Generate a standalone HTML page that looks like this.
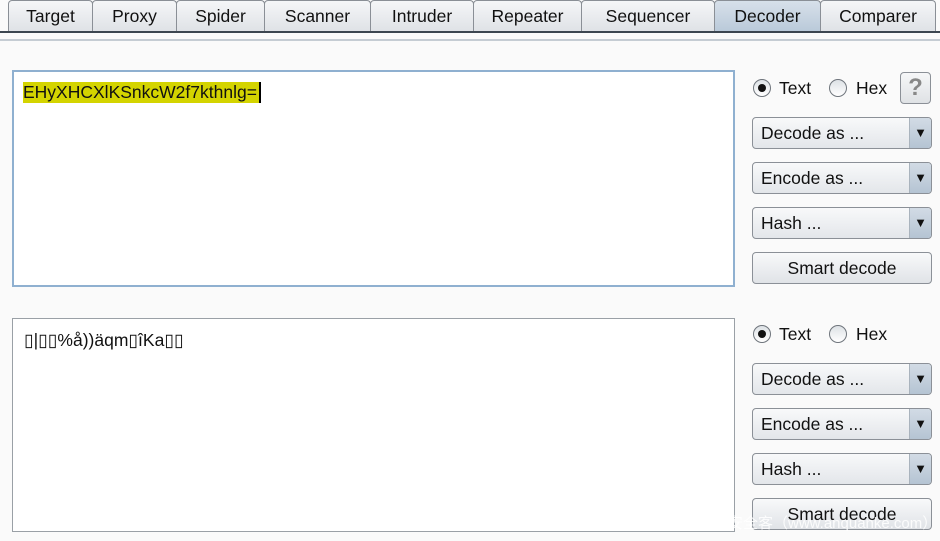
<!DOCTYPE html><html><head><style>
body{margin:0;width:940px;height:541px;background:#fafafa;font-family:"Liberation Sans",Arial,sans-serif;position:relative;overflow:hidden;color:#111}
.tab{position:absolute;top:0;height:31px;border:1px solid #8a8f96;border-bottom:none;border-radius:4px 4px 0 0;background:linear-gradient(#f5f6f8,#dfe2e6);font-size:17.5px;text-align:center;line-height:31px;box-sizing:border-box}
.sel{background:linear-gradient(#d7e0ea,#b9c9d9)}
.ta{position:absolute;background:#fff;box-sizing:border-box}
.dd{position:absolute;left:752px;width:180px;height:32px;box-sizing:border-box;border:1px solid #8b9097;border-radius:4px;background:linear-gradient(#f8f9fa,#e3e6ea);font-size:17.5px;line-height:30px;padding-left:8px}
.dd i{position:absolute;right:0;top:0;width:21px;height:30px;background:linear-gradient(#d2dbe5,#b5c4d3);border-left:1px solid #a9b3bd;border-radius:0 3px 3px 0;font-style:normal;font-size:13px;text-align:center;line-height:30px}
.btn{position:absolute;left:752px;width:180px;height:32px;box-sizing:border-box;border:1px solid #8b9097;border-radius:4px;background:linear-gradient(#f8f9fa,#e0e3e7);font-size:17.5px;line-height:30px;text-align:center}
.rad{position:absolute;width:18px;height:18px;border-radius:50%;border:1px solid #6f757c;box-sizing:border-box;background:linear-gradient(#dde1e5,#fff)}
.rad.on::after{content:"";position:absolute;left:4px;top:4px;width:8px;height:8px;border-radius:50%;background:#111}
.lbl{position:absolute;font-size:17.5px}
</style></head><body>
<div class="tab" style="left:8px;width:85px">Target</div>
<div class="tab" style="left:92px;width:85px">Proxy</div>
<div class="tab" style="left:176px;width:89px">Spider</div>
<div class="tab" style="left:264px;width:107px">Scanner</div>
<div class="tab" style="left:370px;width:104px">Intruder</div>
<div class="tab" style="left:473px;width:109px">Repeater</div>
<div class="tab" style="left:581px;width:134px">Sequencer</div>
<div class="tab sel" style="left:714px;width:107px;height:32px">Decoder</div>
<div class="tab" style="left:820px;width:116px">Comparer</div>
<div style="position:absolute;left:0;top:31px;width:940px;height:2px;background:#3c4650"></div>
<div style="position:absolute;left:0;top:39px;width:940px;height:2px;background:#c5ccd3"></div>

<div class="ta" style="left:12px;top:70px;width:723px;height:217px;border:2px solid #8fb0d0">
<span style="position:absolute;left:9px;top:10px;background:#d4d400;font-size:17.5px;line-height:21px;padding-right:2px;border-right:2px solid #000">EHyXHCXlKSnkcW2f7kthnlg=</span></div>
<div class="ta" style="left:12px;top:318px;width:723px;height:214px;border:1px solid #9aa0a6">
<span style="position:absolute;left:11px;top:11px;font-size:17.5px">▯|▯▯%å))äqm▯îKa▯▯</span></div>

<div class="rad on" style="left:753px;top:79px"></div><span class="lbl" style="left:779px;top:78px">Text</span>
<div class="rad" style="left:829px;top:79px"></div><span class="lbl" style="left:856px;top:78px">Hex</span>
<div style="position:absolute;left:900px;top:72px;width:31px;height:32px;box-sizing:border-box;border:1px solid #8b9097;border-radius:4px;background:linear-gradient(#f6f7f8,#dfe2e5);color:#888;font-size:24px;font-weight:bold;text-align:center;line-height:30px">?</div>
<div class="dd" style="top:117px">Decode as ...<i>▼</i></div>
<div class="dd" style="top:162px">Encode as ...<i>▼</i></div>
<div class="dd" style="top:207px">Hash ...<i>▼</i></div>
<div class="btn" style="top:252px">Smart decode</div>

<div class="rad on" style="left:753px;top:325px"></div><span class="lbl" style="left:779px;top:324px">Text</span>
<div class="rad" style="left:829px;top:325px"></div><span class="lbl" style="left:856px;top:324px">Hex</span>
<div class="dd" style="top:363px">Decode as ...<i>▼</i></div>
<div class="dd" style="top:408px">Encode as ...<i>▼</i></div>
<div class="dd" style="top:453px">Hash ...<i>▼</i></div>
<div class="btn" style="top:498px">Smart decode</div>
<span style="position:absolute;left:728px;top:512px;font-size:15px;color:rgba(255,255,255,.85);font-family:'Liberation Sans','Noto Sans CJK SC',sans-serif">安全客（www.anquanke.com）</span>
</body></html>
